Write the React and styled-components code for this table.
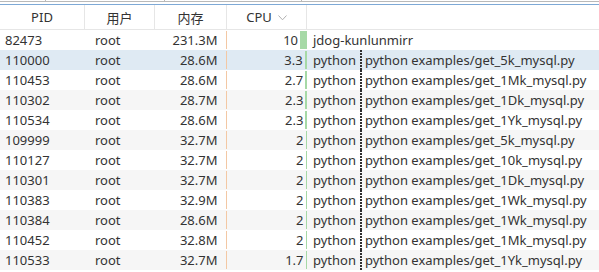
import React from "react";
import styled, { createGlobalStyle } from "styled-components";

const Global = createGlobalStyle`
  html, body { margin: 0; padding: 0; background: #ffffff; }
  body { font-family: "Noto Sans", "Noto Sans CJK SC", sans-serif; color: #333; }
`;

const COLS = "85px 70px 72px 80px 1fr";

const Page = styled.div`
  width: 599px;
  height: 272px;
  overflow: hidden;
  background: #fff;
`;

const TopStrip = styled.div`
  display: flex;
  height: 4px;
  border-bottom: 1px solid #7ea9d6;
`;

const StripBox = styled.div`
  width: ${(p) => p.$w}px;
  flex: ${(p) => (p.$grow ? 1 : "none")};
  height: 1px;
  border-bottom: 1px solid #b9b9b9;
  border-right: ${(p) => (p.$edge ? "1px solid #b9b9b9" : "none")};
  box-sizing: content-box;
`;

const Header = styled.div`
  display: grid;
  grid-template-columns: ${COLS};
  height: 24px;
  border-bottom: 1px solid #e6e6e6;
`;

const HeadCell = styled.div`
  display: flex;
  align-items: center;
  justify-content: center;
  gap: 6px;
  font-size: 13px;
  color: #333;
  border-right: ${(p) => (p.$last ? "none" : "1px solid #e6e6e6")};
`;

const Chevron = styled.svg`
  width: 9px;
  height: 6px;
  margin-top: 1px;
`;

const Row = styled.div`
  display: grid;
  grid-template-columns: ${COLS};
  height: 20px;
  background: ${(p) => (p.$selected ? "#dfeaf3" : p.$alt ? "#f6f6f6" : "#ffffff")};
  font-size: 13px;
  line-height: 20px;
  white-space: nowrap;
`;

const Cell = styled.div`
  display: flex;
  align-items: center;
  justify-content: ${(p) => (p.$right ? "flex-end" : "flex-start")};
  padding-left: ${(p) => p.$pl || 0}px;
  padding-right: ${(p) => p.$pr || 0}px;
  overflow: hidden;
  color: #333;
`;

const Bar = styled.span`
  align-self: stretch;
  margin: 1px 0 1px ${(p) => p.$gap}px;
  background: ${(p) => p.$color};
  flex: none;
`;

const Cmd = styled.div`
  display: flex;
  align-items: stretch;
  padding-left: 6px;
  overflow: hidden;
  color: #333;
`;

const Dots = styled.span`
  width: 2px;
  flex: none;
  margin: 0 3px 0 4px;
  background: repeating-linear-gradient(
    to bottom,
    #2e2e2e 0px,
    #2e2e2e 2px,
    transparent 2px,
    transparent 3px
  );
`;

const rows = [
  ["82473", "root", "231.3M", "10", "jdog-kunlunmirr", null],
  ["110000", "root", "28.6M", "3.3", "python", "python examples/get_5k_mysql.py"],
  ["110453", "root", "28.6M", "2.7", "python", "python examples/get_1Mk_mysql.py"],
  ["110302", "root", "28.7M", "2.3", "python", "python examples/get_1Dk_mysql.py"],
  ["110534", "root", "28.6M", "2.3", "python", "python examples/get_1Yk_mysql.py"],
  ["109999", "root", "32.7M", "2", "python", "python examples/get_5k_mysql.py"],
  ["110127", "root", "32.7M", "2", "python", "python examples/get_10k_mysql.py"],
  ["110301", "root", "32.7M", "2", "python", "python examples/get_1Dk_mysql.py"],
  ["110383", "root", "32.9M", "2", "python", "python examples/get_1Wk_mysql.py"],
  ["110384", "root", "28.6M", "2", "python", "python examples/get_1Wk_mysql.py"],
  ["110452", "root", "32.8M", "2", "python", "python examples/get_1Mk_mysql.py"],
  ["110533", "root", "32.7M", "1.7", "python", "python examples/get_1Yk_mysql.py"],
];

export default function App() {
  return (
    <Page>
      <Global />
      <TopStrip>
        <StripBox $w={45} $edge />
        <StripBox $w={118} $edge />
        <StripBox $w={136} $edge />
        <StripBox $grow />
      </TopStrip>
      <Header>
        <HeadCell>PID</HeadCell>
        <HeadCell>用户</HeadCell>
        <HeadCell>内存</HeadCell>
        <HeadCell>
          CPU
          <Chevron viewBox="0 0 9 6">
            <path d="M0.5 0.5 L4.5 4.8 L8.5 0.5" fill="none" stroke="#b0b0b0" strokeWidth="1" />
          </Chevron>
        </HeadCell>
        <HeadCell $last />
      </Header>
      {rows.map((r, i) => (
        <Row key={r[0]} $selected={i === 1} $alt={i % 2 === 1}>
          <Cell $pl={5}>{r[0]}</Cell>
          <Cell $pl={10}>{r[1]}</Cell>
          <Cell $right>
            {r[2]}
            <Bar $gap={8} $color="#f3c8a4" style={{ width: "1.5px" }} />
          </Cell>
          <Cell $right>
            {r[3]}
            <Bar $gap={2} $color="#a6d9a6" style={{ width: `${Math.max(1.5, parseFloat(r[3]) * 0.7)}px` }} />
          </Cell>
          <Cmd>
            <span>{r[4]}</span>
            {r[5] && (
              <>
                <Dots />
                <span>{r[5]}</span>
              </>
            )}
          </Cmd>
        </Row>
      ))}
    </Page>
  );
}
